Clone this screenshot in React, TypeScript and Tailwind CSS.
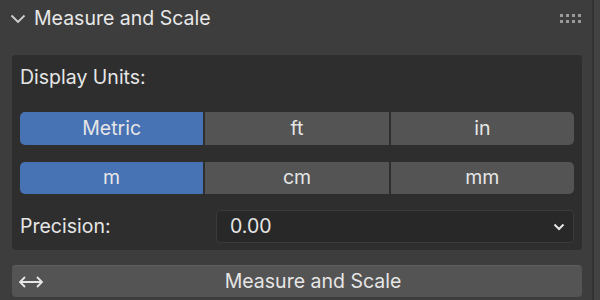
import React from "react";

// Blender-style "Measure and Scale" panel
const font = { fontFamily: "Inter, 'Noto Sans', sans-serif" };

function Segmented({ items, active }: { items: string[]; active: number }) {
  return (
    <div className="flex h-full gap-[2px]">
      {items.map((label, i) => (
        <div
          key={label}
          className={
            "flex-1 flex items-center justify-center text-[19.5px] text-[#e6e6e6] " +
            (i === active ? "bg-[#4772b3] " : "bg-[#545454] ") +
            (i === 0 ? "rounded-l-[5px] " : "") +
            (i === items.length - 1 ? "rounded-r-[5px]" : "")
          }
        >
          {label}
        </div>
      ))}
    </div>
  );
}

function Grip() {
  return (
    <div className="grid grid-cols-4 gap-x-[3px] gap-y-[3px]">
      {Array.from({ length: 8 }).map((_, i) => (
        <span key={i} className="w-[3px] h-[3px] bg-[#9a9a9a]" />
      ))}
    </div>
  );
}

export default function App() {
  return (
    <div className="w-[600px] h-[300px] bg-[#3d3d3d] flex overflow-hidden select-none" style={font}>
      <div className="flex-1 flex flex-col pl-[12px] pr-[10px]">
        {/* header */}
        <div className="h-[55px] flex items-start pt-[5px]">
          <div className="h-[27px] w-full flex items-center">
            <svg width="16" height="10" viewBox="0 0 16 10" className="ml-[-2px] mr-[8px]">
              <path d="M1.5 1.5 L8 8 L14.5 1.5" fill="none" stroke="#cfcfcf" strokeWidth="1.8" />
            </svg>
            <span className="text-[19.5px] text-[#e8e8e8] leading-none">Measure and Scale</span>
            <div className="ml-auto mr-[1px]">
              <Grip />
            </div>
          </div>
        </div>

        {/* panel body */}
        <div className="bg-[#2e2e2e] rounded-[4px] px-[8px] pb-[7px] flex flex-col">
          <div className="h-[46px] flex items-center text-[19.5px] text-[#e6e6e6]">Display Units:</div>
          <div className="h-[33px] mt-[11px]">
            <Segmented items={["Metric", "ft", "in"]} active={0} />
          </div>
          <div className="h-[32px] mt-[17px]">
            <Segmented items={["m", "cm", "mm"]} active={0} />
          </div>
          <div className="h-[33px] mt-[16px] flex items-center">
            <span className="w-[196px] text-[19.5px] text-[#e6e6e6]">Precision:</span>
            <div className="flex-1 h-full bg-[#282828] border border-[#3a3a3a] rounded-[4px] flex items-center pl-[13px] pr-[8px]">
              <span className="text-[19.5px] text-[#e6e6e6]">0.00</span>
              <svg width="12" height="8" viewBox="0 0 12 8" className="ml-auto">
                <path d="M1.5 1.5 L6 6 L10.5 1.5" fill="none" stroke="#e6e6e6" strokeWidth="2" />
              </svg>
            </div>
          </div>
        </div>

        {/* operator button */}
        <div className="mt-[15px] h-[32px] bg-[#545454] border-t border-[#5e5e5e] rounded-[4px] flex items-center pl-[6px]">
          <svg width="26" height="14" viewBox="0 0 26 14" className="shrink-0">
            <path d="M2 7 H24 M7 2 L2 7 L7 12 M19 2 L24 7 L19 12" fill="none" stroke="#e6e6e6" strokeWidth="1.8" />
          </svg>
          <span className="flex-1 text-center text-[19.5px] text-[#e6e6e6]">Measure and Scale</span>
        </div>
      </div>
      {/* right scroll strip */}
      <div className="w-[8px] border-l-2 border-[#333333] bg-[#424242]" />
    </div>
  );
}
